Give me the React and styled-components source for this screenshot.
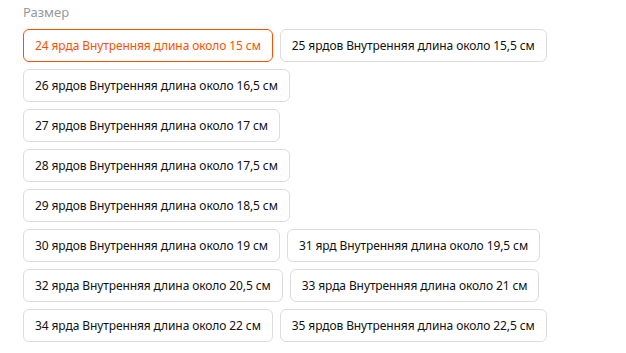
import React from 'react'
import styled, { createGlobalStyle, css } from 'styled-components'

const GlobalStyle = createGlobalStyle`
  body {
    margin: 0;
    background: #ffffff;
    font-family: "Noto Sans", "Open Sans", Arial, sans-serif;
  }
`

const Wrapper = styled.div`
  padding: 4px 23px 0 23px;
`

const Label = styled.div`
  font-size: 13px;
  color: #999999;
  line-height: 16px;
  margin-bottom: 9px;
`

const Options = styled.div`
  display: flex;
  flex-direction: column;
  gap: 7px;
`

const Row = styled.div`
  display: flex;
  gap: 7px;
`

const Chip = styled.button`
  box-sizing: border-box;
  height: 33px;
  padding: 0 11px;
  border: 1px solid #dcdcdc;
  border-radius: 6px;
  background: #fff;
  font-family: inherit;
  font-size: 12px;
  letter-spacing: -0.1px;
  color: #111111;
  white-space: nowrap;
  cursor: pointer;

  ${props => props.active && css`
    border-color: #ff5000;
    color: #ff5000;
  `}
`

const rows = [
  ['24 ярда Внутренняя длина около 15 см', '25 ярдов Внутренняя длина около 15,5 см'],
  ['26 ярдов Внутренняя длина около 16,5 см'],
  ['27 ярдов Внутренняя длина около 17 см'],
  ['28 ярдов Внутренняя длина около 17,5 см'],
  ['29 ярдов Внутренняя длина около 18,5 см'],
  ['30 ярдов Внутренняя длина около 19 см', '31 ярд Внутренняя длина около 19,5 см'],
  ['32 ярда Внутренняя длина около 20,5 см', '33 ярда Внутренняя длина около 21 см'],
  ['34 ярда Внутренняя длина около 22 см', '35 ярдов Внутренняя длина около 22,5 см'],
]

export default function App() {
  return (
    <>
      <GlobalStyle />
      <Wrapper>
        <Label>Размер</Label>
        <Options>
          {rows.map((row, i) => (
            <Row key={i}>
              {row.map(text => (
                <Chip key={text} active={text.startsWith('24')}>{text}</Chip>
              ))}
            </Row>
          ))}
        </Options>
      </Wrapper>
    </>
  )
}
